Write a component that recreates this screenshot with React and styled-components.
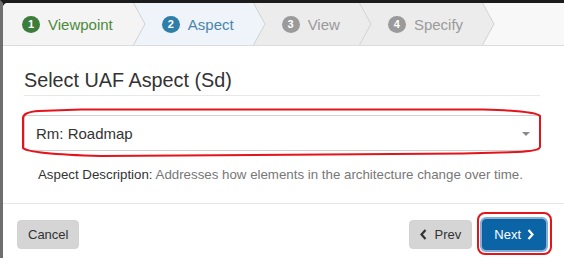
import React from "react";
import styled, { createGlobalStyle } from "styled-components";

const GlobalStyle = createGlobalStyle`
  html, body { margin: 0; padding: 0; background: #fff; }
  body { font-family: "Liberation Sans", Arial, sans-serif; }
  * { box-sizing: border-box; }
`;

const Frame = styled.div`
  height: 258px;
  border-top: 3px solid #1c1c1c;
  border-left: 3px solid #6e6e6e;
  background: #2a2a2a;
`;

const Panel = styled.div`
  height: 100%;
  background: #fff;
  border-top-left-radius: 5px;
  overflow: hidden;
  display: flex;
  flex-direction: column;
`;

const TabBar = styled.div`
  display: flex;
  height: 43px;
  flex: none;
  background: #f8f8f8;
  border-bottom: 1px solid #dcdcdc;
`;

const Tab = styled.div`
  display: flex;
  align-items: center;
  gap: 8px;
  padding: ${(p) => (p.$first ? "0 20px 0 19px" : "0 19px 0 16px")};
  background: ${(p) => p.$bg};
  color: ${(p) => p.$color};
  font-size: 15px;
  white-space: nowrap;
`;

const Badge = styled.span`
  display: inline-flex;
  align-items: center;
  justify-content: center;
  width: 18px;
  height: 17px;
  border-radius: 50%;
  background: ${(p) => p.$bg};
  color: #fff;
  font-size: 11px;
  font-weight: bold;
`;

const SepSvg = styled.svg`
  flex: none;
  display: block;
`;

function Sep({ left, right }) {
  return (
    <SepSvg width="13" height="42" viewBox="0 0 13 42">
      <polygon points="0,0 0.5,0 12,21 0.5,42 0,42" fill={left} />
      <polygon points="0.5,0 13,0 13,42 0.5,42 12,21" fill={right} />
      <polyline points="0.5,0 12,21 0.5,42" fill="none" stroke="#d2d2d2" strokeWidth="1" />
    </SepSvg>
  );
}

const Body = styled.div`
  flex: 1;
  padding: 23px 24px 0 21px;
`;

const Heading = styled.h3`
  margin: 0;
  font-size: 19.8px;
  font-weight: normal;
  line-height: 22px;
  color: #333;
  padding-bottom: 4px;
  border-bottom: 1px solid #e8e8e8;
`;

const SelectWrap = styled.div`
  position: relative;
  margin-top: 19px;
`;

const SelectBox = styled.div`
  height: 36px;
  border: 1px solid #d0d0d0;
  border-radius: 2px;
  padding: 0 9px 0 11px;
  display: flex;
  align-items: center;
  justify-content: space-between;
  font-size: 15px;
  color: #333;
`;

const Caret = styled.span`
  width: 0;
  height: 0;
  border-left: 4px solid transparent;
  border-right: 4px solid transparent;
  border-top: 4px solid #8a8a8a;
  margin-top: 1px;
`;

const Scribble = styled.svg`
  position: absolute;
  left: -3px;
  top: -7px;
  pointer-events: none;
  overflow: visible;
`;

const Description = styled.div`
  margin-top: 15px;
  padding-left: 14px;
  font-size: 13.3px;
  line-height: 18px;
  color: #777;
`;

const Label = styled.span`
  color: #333;
`;

const Footer = styled.div`
  flex: none;
  height: 55px;
  border-top: 1px solid #e6e6e6;
  padding: 16px 18px 0 14px;
  display: flex;
  justify-content: space-between;
  align-items: flex-start;
`;

const Group = styled.div`
  display: flex;
  gap: 10px;
  align-items: flex-start;
`;

const Button = styled.button`
  position: relative;
  height: ${(p) => (p.$primary ? 31 : 29)}px;
  margin-top: ${(p) => (p.$primary ? -1 : 0)}px;
  padding: 0 ${(p) => (p.$primary ? 11 : 10)}px;
  display: inline-flex;
  align-items: center;
  gap: ${(p) => (p.$primary ? 6 : 8)}px;
  font-family: inherit;
  font-size: 13px;
  border-radius: 4px;
  border: 1px solid ${(p) => (p.$primary ? "#1a5c92" : "#d3d3d3")};
  background: ${(p) => (p.$primary ? "#0b64a6" : "#d5d5d5")};
  color: ${(p) => (p.$primary ? "#fff" : "#333")};
  box-shadow: ${(p) => (p.$primary ? "0 0 0 2px #7fb1de" : "none")};
`;

const Ring = styled.span`
  position: absolute;
  left: -6px;
  right: -7px;
  top: -8px;
  bottom: -6px;
  border: 2px solid #e3141c;
  border-radius: 8px;
  pointer-events: none;
`;

const Chevron = ({ dir }) => (
  <svg width="7" height="11" viewBox="0 0 7 11" style={{ display: "block" }}>
    <polyline
      points={dir === "left" ? "5.5,1 1.5,5.5 5.5,10" : "1.5,1 5.5,5.5 1.5,10"}
      fill="none"
      stroke="currentColor"
      strokeWidth="2.2"
    />
  </svg>
);

const tabs = [
  { n: 1, label: "Viewpoint", bg: "#f4f4f4", color: "#4d8a3a", badge: "#3d7d3b" },
  { n: 2, label: "Aspect", bg: "#eef4fa", color: "#4a86aa", badge: "#2f7ea8" },
  { n: 3, label: "View", bg: "#ececec", color: "#9a9a9a", badge: "#9a9a9a" },
  { n: 4, label: "Specify", bg: "#ececec", color: "#9a9a9a", badge: "#9a9a9a" },
];

export default function App() {
  return (
    <>
      <GlobalStyle />
      <Frame>
        <Panel>
          <TabBar>
            {tabs.map((t, i) => (
              <React.Fragment key={t.n}>
                <Tab $first={i === 0} $bg={t.bg} $color={t.color}>
                  <Badge $bg={t.badge}>{t.n}</Badge>
                  {t.label}
                </Tab>
                <Sep left={t.bg} right={i < tabs.length - 1 ? tabs[i + 1].bg : "#f8f8f8"} />
              </React.Fragment>
            ))}
          </TabBar>
          <Body>
            <Heading>Select UAF Aspect (Sd)</Heading>
            <SelectWrap>
              <SelectBox>
                Rm: Roadmap
                <Caret />
              </SelectBox>
              <Scribble width="522" height="50" viewBox="0 0 522 50">
                <path
                  d="M2 11 Q1 4 18 3 L60 1.5 L462 1.5 Q514 3 519 8 L519 39 Q518 43 496 44 L442 45.5 L80 48 Q8 46 2 40 Z"
                  fill="none"
                  stroke="#e3141c"
                  strokeWidth="2"
                />
              </Scribble>
            </SelectWrap>
            <Description>
              <Label>Aspect Description:</Label> Addresses how elements in the architecture change over time.
            </Description>
          </Body>
          <Footer>
            <Button>Cancel</Button>
            <Group>
              <Button>
                <Chevron dir="left" />
                Prev
              </Button>
              <Button $primary>
                Next
                <Chevron dir="right" />
                <Ring />
              </Button>
            </Group>
          </Footer>
        </Panel>
      </Frame>
    </>
  );
}
